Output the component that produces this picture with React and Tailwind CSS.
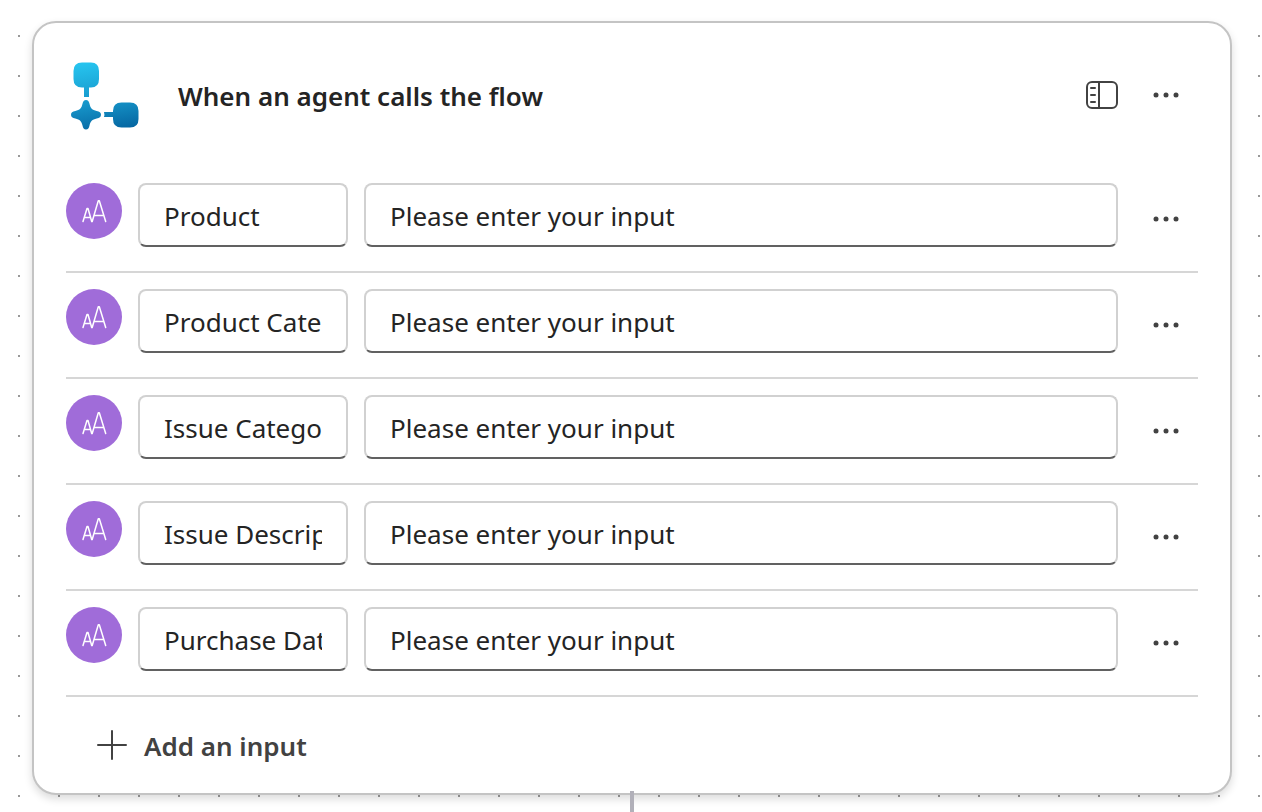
import { useState } from "react";

const INPUTS = ["Product", "Product Category", "Issue Category", "Issue Description", "Purchase Date"];

function FlowLogo() {
  return (
    <svg width="72" height="70" viewBox="-1 -1 72 70" aria-hidden="true">
      <defs>
        <linearGradient id="flow" x1="24" y1="0" x2="36" y2="72" gradientUnits="userSpaceOnUse">
          <stop offset="0" stopColor="#26c3ee" />
          <stop offset="0.55" stopColor="#1695c9" />
          <stop offset="1" stopColor="#04629e" />
        </linearGradient>
      </defs>
      <g fill="url(#flow)">
        <path d="M11 .5h9q8 0 8 8.500v8q0 8.500-8 8.500h-2V35h-5v-9.500h-2q-8.500 0-8.500-8.500V9q0-8.500 8.500-8.500Z" />
        <path d="M15 38c2 0 3 1.500 3.500 3.800 1 4.600 2.600 6.200 7.200 7.200 2.800.6 4.300 1.600 4.300 3.700s-1.500 3.100-4.300 3.700c-4.600 1-6.200 2.600-7.200 7.200-.5 2.500-1.500 4-3.500 4s-3-1.500-3.500-4c-1-4.600-2.600-6.200-7.200-7.200C1.500 55.800 0 54.800 0 52.700S1.500 49.600 4.300 49c4.600-1 6.200-2.600 7.200-7.200.5-2.300 1.500-3.800 3.500-3.800Z" />
        <path d="M33 50h9v-1q0-8.500 8.500-8.500H59q8.500 0 8.500 8.500v8q0 8.500-8.500 8.500h-8.500q-8.500 0-8.500-8.500v-2h-9q.8-2.500 0-5Z" />
      </g>
    </svg>
  );
}

function PanelIcon() {
  return (
    <svg width="32" height="28" viewBox="0 0 32 28" fill="none" stroke="#424242" strokeWidth="2" aria-hidden="true">
      <rect x="1" y="1" width="30" height="26" rx="5" />
      <path d="M13 1v26" />
      <path d="M5 7h4M5 14h4M5 21h4" strokeLinecap="round" />
    </svg>
  );
}

function MoreIcon() {
  return (
    <svg width="26" height="6" viewBox="0 0 26 6" fill="#424242" aria-hidden="true">
      <circle cx="3" cy="3" r="2.500" />
      <circle cx="13" cy="3" r="2.500" />
      <circle cx="23" cy="3" r="2.500" />
    </svg>
  );
}

function TextTypeIcon() {
  return (
    <span className="flex size-14 shrink-0 items-center justify-center rounded-full bg-[#a06cd9]">
      <svg width="26" height="24" viewBox="0 0 26 24" fill="none" stroke="#fff" strokeWidth="1.500" strokeLinecap="round" strokeLinejoin="round" aria-hidden="true">
        <path d="M2 22.500 6 9.500h1l3.700 13M3.300 18.500h6.200" />
        <path d="M11.200 22.500 17.300 1.800h1l6.400 20.700M13.200 16.500h9.500" />
      </svg>
    </span>
  );
}

const field =
  "h-16 rounded-lg border-2 border-[#d1d1d1] border-b-[#616161] bg-white px-6 pt-0.5 text-[26px] text-[#242424] outline-none focus:border-b-[#0f6cbd]";

function InputRow({ name }) {
  const [title, setTitle] = useState(name);
  const [value, setValue] = useState("Please enter your input");
  return (
    <li className="flex items-start gap-4 border-b-2 border-[#d6d6d6] pt-4 pb-4">
      <TextTypeIcon />
      <input aria-label="Input name" className={`${field} w-[210px] shrink-0`} value={title} onChange={(e) => setTitle(e.target.value)} />
      <input aria-label={`${name} description`} className={`${field} min-w-0 flex-1`} value={value} onChange={(e) => setValue(e.target.value)} />
      <button type="button" aria-label={`More options for ${name}`} className="flex h-[72px] w-16 shrink-0 items-center justify-center">
        <MoreIcon />
      </button>
    </li>
  );
}

export default function App() {
  return (
    <main className="flex min-h-screen flex-col bg-white bg-[conic-gradient(at_2px_2px,transparent_75%,#999_0)] bg-[length:40px_40px] bg-[position:18px_35px] pt-[21px] pr-[30px] pl-8 font-['Noto_Sans','Open_Sans',sans-serif]">
      <section className="rounded-3xl border-2 border-[#c4c4c4] bg-white px-8 shadow-[0_4px_8px_rgba(0,0,0,0.14)]">
        <header className="flex h-36 items-center">
          <div className="flex w-28 shrink-0 items-center pt-0.5 pl-1">
            <FlowLogo />
          </div>
          <h1 className="min-w-0 flex-1 pt-0.5 text-[26px] font-semibold text-[#242424]">When an agent calls the flow</h1>
          <button type="button" aria-label="Open panel" className="mr-4 flex size-8 items-center justify-center">
            <PanelIcon />
          </button>
          <button type="button" aria-label="More options" className="flex h-16 w-16 items-center justify-center">
            <MoreIcon />
          </button>
        </header>
        <ul>
          {INPUTS.map((name) => (
            <InputRow key={name} name={name} />
          ))}
        </ul>
        <div className="flex h-24 items-center pl-[30px]">
          <button type="button" className="flex items-center gap-4 text-[26px] font-semibold text-[#424242]">
            <svg width="32" height="32" viewBox="0 0 32 32" fill="none" stroke="#424242" strokeWidth="2" strokeLinecap="round" aria-hidden="true">
              <path d="M16 2v28M2 16h28" />
            </svg>
            <span className="pt-0.5">Add an input</span>
          </button>
        </div>
      </section>
      <div className="relative -mt-1 w-1 flex-1 self-center bg-[#b1b0b9]" />
    </main>
  );
}
